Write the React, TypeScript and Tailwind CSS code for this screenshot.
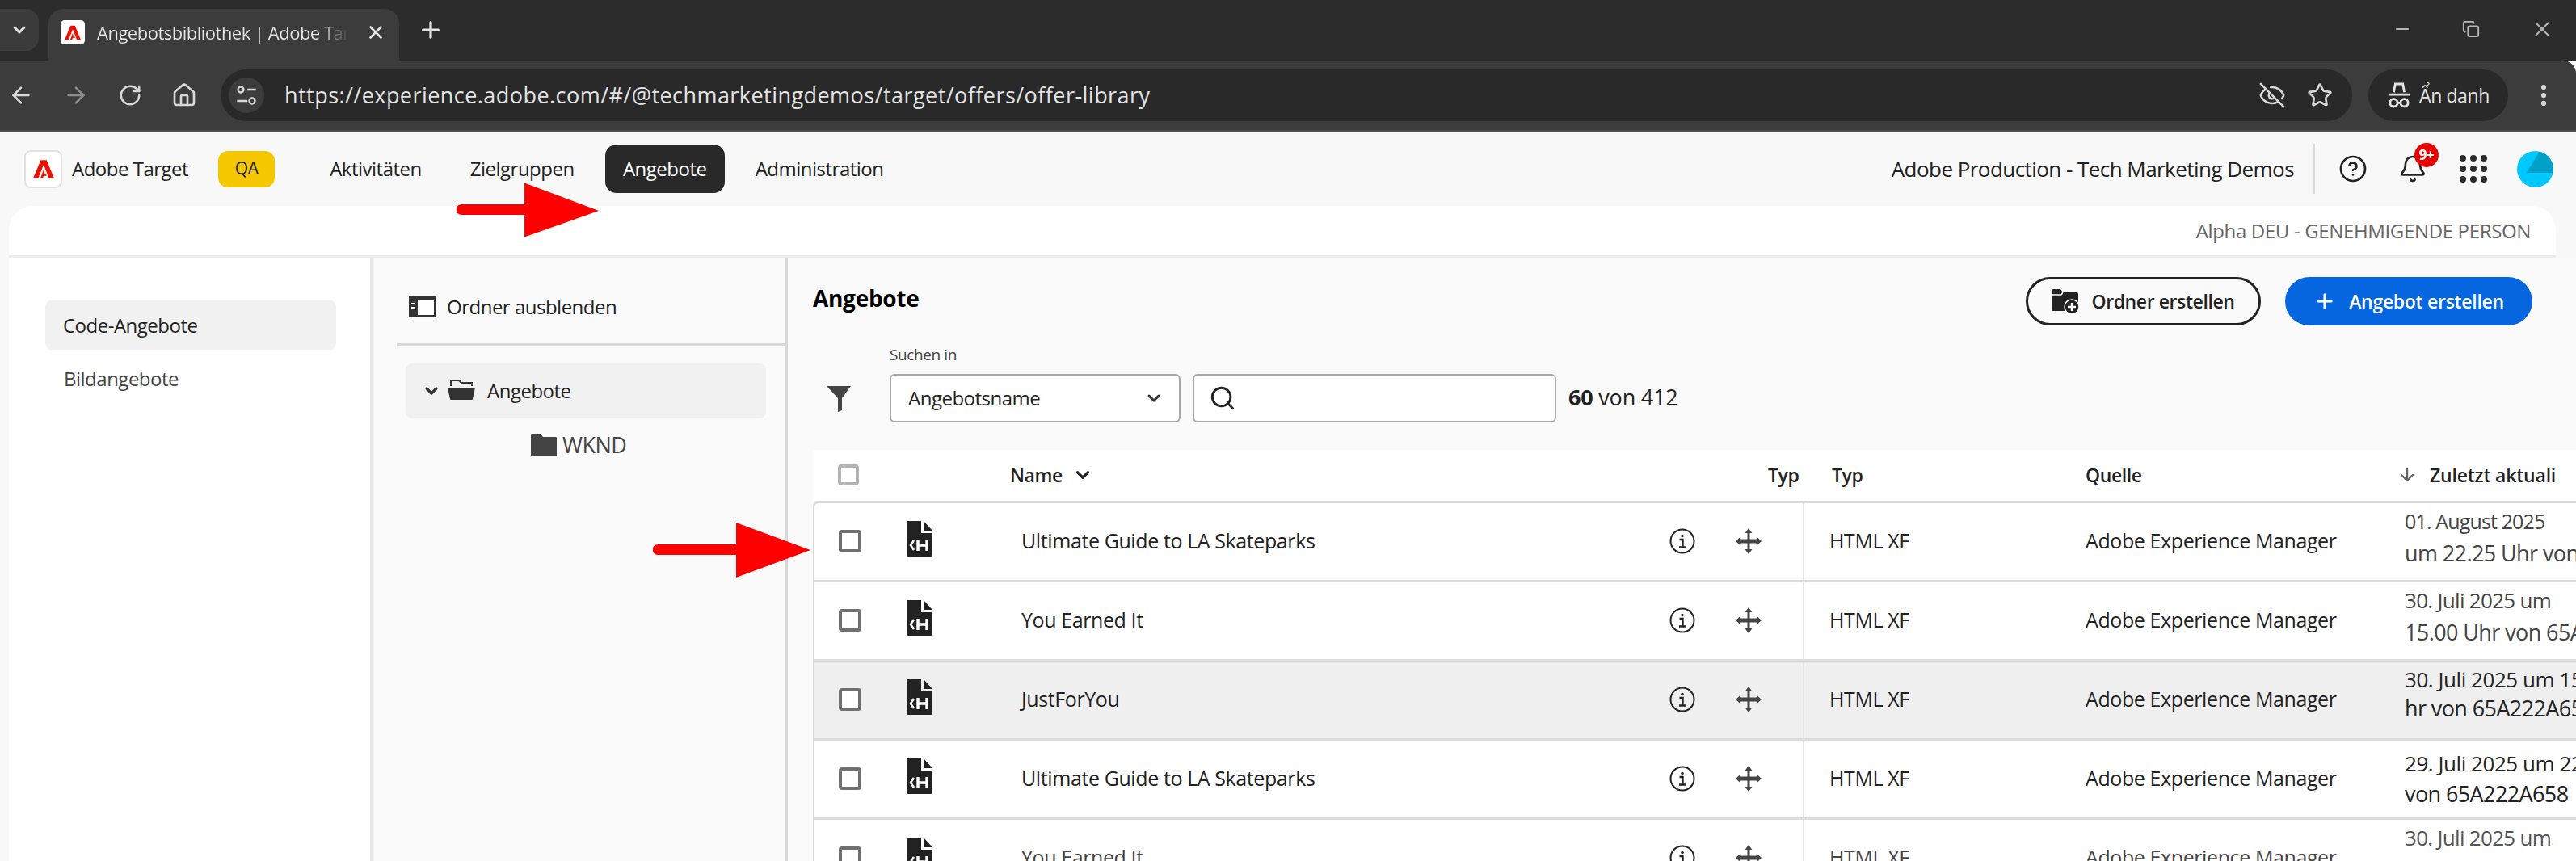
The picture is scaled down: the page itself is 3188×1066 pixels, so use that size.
import { ChevronDown, ArrowLeft, ArrowRight, RotateCw, House, Plus, X, Minus, Star, EyeOff, Search, CircleHelp, Bell, ArrowDown, EllipsisVertical, Copy } from "lucide-react";

const sans = "font-['Open_Sans',sans-serif]";

function AdobeMark({ className }: { className: string }) {
  return (
    <svg viewBox="0 0 30 26" className={className}>
      <path fill="#eb1000" d="M10.9 0 0 26h7.4L15 6.7 22.6 26H30L19.1 0Z M15 13.5l-4.6 12.5h3.4l1.3-3.6h4.2l-1.2-3.3h-2Z" />
    </svg>
  );
}

function HtmlDoc() {
  return (
    <svg viewBox="0 0 32 44" className="w-[32px] h-[44px] shrink-0">
      <path fill="#222" d="M1 0h17v15h14v27a2 2 0 0 1-2 2H2a2 2 0 0 1-2-2V1Z M21 0l11 12H21Z" />
      <path fill="none" stroke="#fff" strokeWidth="2.6" d="M9 24l-4 6 4 6" />
      <path fill="none" stroke="#fff" strokeWidth="3.4" d="M14 23v14M25 23v14M14 30h11" />
    </svg>
  );
}

function InfoIcon() {
  return (
    <svg viewBox="0 0 32 32" className="h-[32px] w-[32px] shrink-0" fill="none" stroke="#222" strokeWidth="2">
      <circle cx="16" cy="16" r="14.5" />
      <circle cx="16" cy="9.5" r="1.8" fill="#222" stroke="none" />
      <path strokeWidth="2.4" d="M12.5 14H16.5V23M12 23.5h9" />
    </svg>
  );
}

function MoveIcon() {
  return (
    <svg viewBox="0 0 32 32" className="h-[32px] w-[32px] shrink-0" fill="#444">
      <path d="M14.5 3h3v26h-3Z" />
      <path d="M3 13.5h26v5H3Z" />
      <path d="M16 0l4.5 6h-9Z M16 32l-4.5-6h9Z M0 16l5-4.5v9Z M32 16l-5 4.5v-9Z" />
    </svg>
  );
}

function FolderAdd() {
  return (
    <svg viewBox="0 0 34 30" className="mr-[15px] h-[30px] w-[34px] shrink-0">
      <path fill="#222" d="M0 2a2 2 0 0 1 2-2h9l3 4h17a2 2 0 0 1 2 2v19a2 2 0 0 1-2 2H2a2 2 0 0 1-2-2Z" />
      <path fill="none" stroke="#fff" strokeWidth="1.4" d="M1 7h11l2-3" />
      <circle cx="25" cy="22" r="9" fill="#222" stroke="#fafafa" strokeWidth="1.5" />
      <path fill="none" stroke="#fff" strokeWidth="2.4" d="M25 17v10M20 22h10" />
    </svg>
  );
}

const rows = [
  {
    name: "Ultimate Guide to LA Skateparks",
    d1: "01. August 2025",
    d2: "um 22.25 Uhr von 65A222A658",
    dateClass: "-mt-[10px] leading-[40px] text-[#444]",
    d1Class: "text-[25px] tracking-[-0.85px]",
  },
  {
    name: "You Earned It",
    d1: "30. Juli 2025 um",
    d2: "15.00 Uhr von 65A222A658",
    dateClass: "-mt-[10px] leading-[40px] text-[#444]",
    d1Class: "text-[26px] tracking-[-0.7px]",
  },
  {
    name: "JustForYou",
    d1: "30. Juli 2025 um 15.00 Uhr",
    d2: "hr von 65A222A658",
    active: true,
    dateClass: "-mt-[14px] leading-[36px] text-[#222]",
    d1Class: "text-[26px] tracking-[-0.45px]",
  },
  {
    name: "Ultimate Guide to LA Skateparks",
    d1: "29. Juli 2025 um 22.25 Uhr",
    d2: "von 65A222A658",
    dateClass: "leading-[37px] text-[#222]",
    d1Class: "text-[26px] tracking-[-0.45px]",
  },
  {
    name: "You Earned It",
    d1: "30. Juli 2025 um",
    d2: "15.00 Uhr von 65A222A658",
    faded: true,
    dateClass: "-mt-[10px] leading-[40px] text-[#555]",
    d1Class: "text-[26px] tracking-[-0.7px]",
  },
];

function OfferRow({ row, first }: { row: (typeof rows)[number]; first: boolean }) {
  const textCls = `text-[25px] tracking-[-0.4px] ${row.faded ? "text-[#444]" : "text-[#222]"}`;
  return (
    <div className={`flex h-[98px] shrink-0 items-center border-t-[3px] border-l-2 border-[#dcdcdc] ${row.active ? "bg-[#efefef]" : "bg-white"} ${first ? "rounded-tl-[8px]" : ""}`}>
      <div className="flex h-full w-[1225px] shrink-0 items-center border-r-2 border-[#e4e4e4] pl-[30px]">
        <span className="h-[28px] w-[28px] shrink-0 rounded-[4px] border-[4px] border-[#707070] bg-white" />
        <div className="ml-[56px] -mt-[6px]"><HtmlDoc /></div>
        <span className={`ml-[110px] w-[802px] ${textCls}`}>{row.name}</span>
        <InfoIcon />
        <div className="ml-[50px]"><MoveIcon /></div>
      </div>
      <span className={`ml-[31px] w-[317px] shrink-0 ${textCls}`}>HTML XF</span>
      <span className={`w-[395px] shrink-0 ${textCls}`}>Adobe Experience Manager</span>
      <div className={`whitespace-nowrap ${row.dateClass}`}>
        <div className={row.d1Class}>{row.d1}</div>
        <div className="text-[27px] tracking-[-0.6px]">{row.d2}</div>
      </div>
    </div>
  );
}

export default function App() {
  return (
    <div className={`relative flex h-[1066px] w-[3188px] flex-col overflow-hidden bg-[#f8f8f8] ${sans}`}>
      {/* tab strip */}
      <div className="flex h-[75px] shrink-0 items-start bg-[#2c2c2c] pt-[11px] text-[#e6e6e6]">
        <div className="flex h-[52px] w-[48px] items-center justify-center rounded-r-[16px] bg-[#3b3b3b]">
          <ChevronDown size={24} strokeWidth={3} />
        </div>
        <div className="ml-[12px] flex h-[64px] w-[434px] items-center rounded-t-[18px] bg-[#3c3c3c] pl-[15px] pb-[6px]">
          <div className="flex h-[30px] w-[30px] items-center justify-center rounded-[5px] bg-white">
            <AdobeMark className="h-[21px] w-[20px]" />
          </div>
          <span className="ml-[15px] w-[312px] overflow-hidden whitespace-nowrap bg-linear-to-r from-[#e6e6e6] from-[88%] to-[#3c3c3c] bg-clip-text text-[22px] tracking-[-0.5px] text-transparent">Angebotsbibliothek | Adobe Target</span>
          <X size={26} strokeWidth={2.4} className="ml-[20px] shrink-0" />
        </div>
        <Plus size={32} strokeWidth={2.4} className="ml-[23px] mt-[10px]" />
        <div className="ml-auto flex items-center gap-[62px] pr-[27px] pt-[10px] text-[#b8b8b8]">
          <Minus size={24} strokeWidth={2} />
          <Copy size={22} strokeWidth={2} />
          <X size={30} strokeWidth={1.6} />
        </div>
      </div>

      {/* toolbar */}
      <div className="flex h-[88px] shrink-0 items-center rounded-tr-[16px] border-b-[2px] border-[#4a4f4f] bg-[#3c3c3c] text-[#d8d8d8]">
        <ArrowLeft size={32} strokeWidth={2} className="ml-[10px]" />
        <ArrowRight size={32} strokeWidth={2} className="ml-[36px] text-[#8e8e8e]" />
        <RotateCw size={30} strokeWidth={2} className="ml-[36px]" />
        <House size={32} strokeWidth={2} className="ml-[36px]" />
        <div className="ml-[29px] flex h-[64px] w-[2638px] items-center rounded-full bg-[#292929] pl-[10px] pr-[24px]">
          <div className="flex h-[44px] w-[44px] items-center justify-center rounded-full bg-[#3c3c3c]">
            <svg viewBox="0 0 24 24" className="h-[28px] w-[28px]" fill="none" stroke="currentColor" strokeWidth="2">
              <circle cx="6" cy="6" r="3" /><path d="M13 6h9M2 18h11" /><circle cx="18" cy="18" r="3" />
            </svg>
          </div>
          <span className="ml-[25px] text-[27px] tracking-[0.45px] text-[#e4e4e4]">https://experience.adobe.com/#/@techmarketingdemos/target/offers/offer-library</span>
          <EyeOff size={34} strokeWidth={1.8} className="ml-auto" />
          <Star size={32} strokeWidth={2} className="ml-[26px]" />
        </div>
        <div className="ml-[20px] flex h-[64px] w-[173px] items-center rounded-full bg-[#292929] pl-[24px] text-[#e4e4e4]">
          <svg viewBox="0 0 30 38" className="h-[36px] w-[28px]" fill="none" stroke="currentColor" strokeWidth="3">
            <path d="M8 15l2-11h10l2 11M1 18h28" /><circle cx="8" cy="29" r="5" /><circle cx="22" cy="29" r="5" /><path d="M13 29h4" />
          </svg>
          <span className="ml-[11px] text-[23px] tracking-[-0.4px] whitespace-nowrap">Ẩn danh</span>
        </div>
        <EllipsisVertical size={34} strokeWidth={2.4} className="ml-[27px]" />
      </div>

      {/* app nav */}
      <div className="flex h-[92px] shrink-0 items-center text-[24px] tracking-[-0.5px] text-[#222]">
        <div className="ml-[30px] flex h-[47px] w-[47px] items-center justify-center rounded-[8px] border-2 border-[#e2e2e2] bg-white">
          <AdobeMark className="h-[25px] w-[26px]" />
        </div>
        <span className="ml-[12px] whitespace-nowrap">Adobe Target</span>
        <span className="ml-[37px] flex h-[45px] w-[70px] items-center justify-center rounded-[12px] bg-[#f5c700] text-[21px]">QA</span>
        <span className="ml-[68px]">Aktivitäten</span>
        <span className="ml-[60px]">Zielgruppen</span>
        <span className="ml-[38px] flex h-[60px] w-[148px] items-center justify-center rounded-[14px] bg-[#292929] text-white">Angebote</span>
        <span className="ml-[38px]">Administration</span>
        <span className="ml-auto text-[26px] tracking-[-0.55px]">Adobe Production - Tech Marketing Demos</span>
        <span className="ml-[24px] h-[62px] w-[2px] bg-[#dcdcdc]" />
        <CircleHelp size={36} strokeWidth={1.8} className="ml-[29px]" />
        <div className="relative ml-[38px]">
          <Bell size={36} strokeWidth={1.8} />
          <span className="absolute -right-[14px] -top-[14px] flex h-[30px] w-[30px] items-center justify-center rounded-full bg-[#e60000] text-[17px] font-bold text-white">9+</span>
        </div>
        <div className="ml-[40px] grid grid-cols-3 gap-[5px]">
          {Array.from({ length: 9 }).map((_, i) => (
            <span key={i} className="h-[8px] w-[8px] rounded-full bg-[#2c2c2c]" />
          ))}
        </div>
        <div className="ml-[37px] mr-[28px] h-[45px] w-[45px] overflow-hidden rounded-full bg-[#00c8ff]">
          <svg viewBox="0 0 45 45" className="h-full w-full"><path fill="#00a0c8" d="M28 0 12 27h33V6Z" /></svg>
        </div>
      </div>

      {/* card header */}
      <div className="ml-[11px] mr-[25px] flex h-[65px] shrink-0 items-center justify-end rounded-t-[30px] border-b-[4px] border-[#ececec] bg-white pr-[31px] text-[24px] tracking-[-0.35px] text-[#666]">
        Alpha DEU - GENEHMIGENDE PERSON
      </div>

      <div className="ml-[11px] flex min-h-0 flex-1">
        {/* left nav */}
        <div className="w-[450px] shrink-0 border-r-[3px] border-[#e8e8e8] bg-white pl-[45px] pt-[52px] text-[24px] tracking-[-0.5px]">
          <div className="flex h-[61px] w-[360px] items-center rounded-[8px] bg-[#f1f1f1] pl-[22px] text-[#222]">Code-Angebote</div>
          <div className="mt-[18px] pl-[23px] text-[#444]">Bildangebote</div>
        </div>

        {/* folders */}
        <div className="w-[514px] shrink-0 border-r-[3px] border-[#d8d8d8] bg-[#fafafa] text-[24px] tracking-[-0.5px] text-[#222]">
          <div className="ml-[30px] flex h-[109px] items-center border-b-[4px] border-[#d8d8d8] pl-[15px] pt-[14px]">
            <svg viewBox="0 0 34 27" className="h-[27px] w-[34px]">
              <path fill="#333" d="M0 1a1 1 0 0 1 1-1h32a1 1 0 0 1 1 1v25a1 1 0 0 1-1 1H1a1 1 0 0 1-1-1Z" />
              <path fill="#fff" d="M11 6h20v18H11Z M3 9h5v2H3Z M3 14h5v2H3Z" />
            </svg>
            <span className="ml-[13px]">Ordner ausblenden</span>
          </div>
          <div className="ml-[41px] mt-[21px] flex h-[68px] w-[446px] items-center rounded-[8px] bg-[#f1f1f1] pl-[20px]">
            <ChevronDown size={24} strokeWidth={3.4} className="text-[#333]" />
            <svg viewBox="0 0 34 26" className="ml-[8px] h-[26px] w-[34px] -mt-[4px]">
              <path fill="#333" d="M0 11h34l-3 14a1 1 0 0 1-1 1H4a1 1 0 0 1-1-1Z" />
              <path fill="none" stroke="#333" strokeWidth="2" d="M4 9V2h10l3 3h13v4" />
            </svg>
            <span className="ml-[15px]">Angebote</span>
          </div>
          <div className="mt-[13px] flex items-center pl-[196px] text-[#444]">
            <svg viewBox="0 0 32 28" className="h-[28px] w-[32px]">
              <path fill="#444" d="M0 1a1 1 0 0 1 1-1h11l3 4h16a1 1 0 0 1 1 1v22a1 1 0 0 1-1 1H1a1 1 0 0 1-1-1Z" />
            </svg>
            <span className="ml-[7px] text-[27px]">WKND</span>
          </div>
        </div>

        {/* main */}
        <div className="min-w-0 flex-1 overflow-hidden bg-[#fafafa] pl-[31px]">
          <div className="flex items-center pr-[54px] pt-[23px]">
            <h1 className="-mt-[8px] text-[28px] font-bold tracking-[-0.3px] text-black">Angebote</h1>
            <button className="ml-auto flex h-[60px] w-[291px] items-center justify-center rounded-full border-[3px] border-[#222] bg-transparent text-[23px] font-semibold tracking-[-0.4px] text-[#222]">
              <FolderAdd />
              Ordner erstellen
            </button>
            <button className="ml-[30px] flex h-[60px] w-[306px] items-center justify-center rounded-full bg-[#0566e0] text-[23px] font-semibold tracking-[-0.3px] text-white">
              <Plus size={28} strokeWidth={2.6} className="mr-[16px]" />
              Angebot erstellen
            </button>
          </div>

          <div className="mt-[22px] flex items-end pl-[17px]">
            <svg viewBox="0 0 30 32" className="mb-[13px] h-[32px] w-[30px]">
              <path fill="#444" d="M0 0h30L19 15v15l-5 2V15Z" />
            </svg>
            <div className="ml-[48px]">
              <div className="mb-[9px] text-[19px] tracking-[-0.4px] text-[#444]">Suchen in</div>
              <div className="flex h-[60px] w-[360px] items-center justify-between rounded-[6px] border-2 border-[#a8a8a8] bg-white pl-[21px] pr-[19px] text-[24px] tracking-[-0.5px] text-[#222]">
                Angebotsname
                <ChevronDown size={24} strokeWidth={3} className="text-[#333]" />
              </div>
            </div>
            <div className="ml-[15px] flex h-[60px] w-[450px] items-center rounded-[6px] border-2 border-[#a8a8a8] bg-white pl-[18px]">
              <Search size={34} strokeWidth={2} className="text-[#222]" />
            </div>
            <div className="ml-[15px] flex h-[60px] items-center text-[27px] tracking-[-0.2px] text-[#222]">
              <b>60</b>&nbsp;von 412
            </div>
          </div>

          {/* table */}
          <div className="mt-[34px] w-[2182px]">
            <div className="flex h-[63px] items-center bg-white text-[23px] font-semibold tracking-[-0.4px] text-[#222]">
              <span className="ml-[31px] h-[26px] w-[26px] shrink-0 rounded-[4px] border-[4px] border-[#b4b4b4] bg-white" />
              <div className="ml-[187px] flex w-[938px] shrink-0 items-center">
                Name
                <ChevronDown size={26} strokeWidth={3} className="ml-[12px]" />
              </div>
              <span className="w-[79px] shrink-0">Typ</span>
              <span className="w-[314px] shrink-0">Typ</span>
              <span className="w-[386px] shrink-0">Quelle</span>
              <ArrowDown size={24} strokeWidth={2.4} className="shrink-0 text-[#666]" />
              <span className="ml-[16px] whitespace-nowrap tracking-[-0.2px]">Zuletzt aktuali</span>
            </div>
            {rows.map((row, i) => (
              <OfferRow key={i} row={row} first={i === 0} />
            ))}
          </div>
        </div>
      </div>

      {/* annotation arrows */}
      <svg viewBox="0 0 180 68" className="absolute left-[565px] top-[226px] h-[68px] w-[178px]">
        <path fill="#ff0000" d="M85 0v27H6a6.5 6.5 0 0 0 0 13h79v28l93-33Z" />
      </svg>
      <svg viewBox="0 0 195 68" className="absolute left-[808px] top-[647px] h-[68px] w-[195px]">
        <path fill="#ff0000" d="M103 0v27H6a6.5 6.5 0 0 0 0 13h97v28l92-34Z" />
      </svg>
    </div>
  );
}
